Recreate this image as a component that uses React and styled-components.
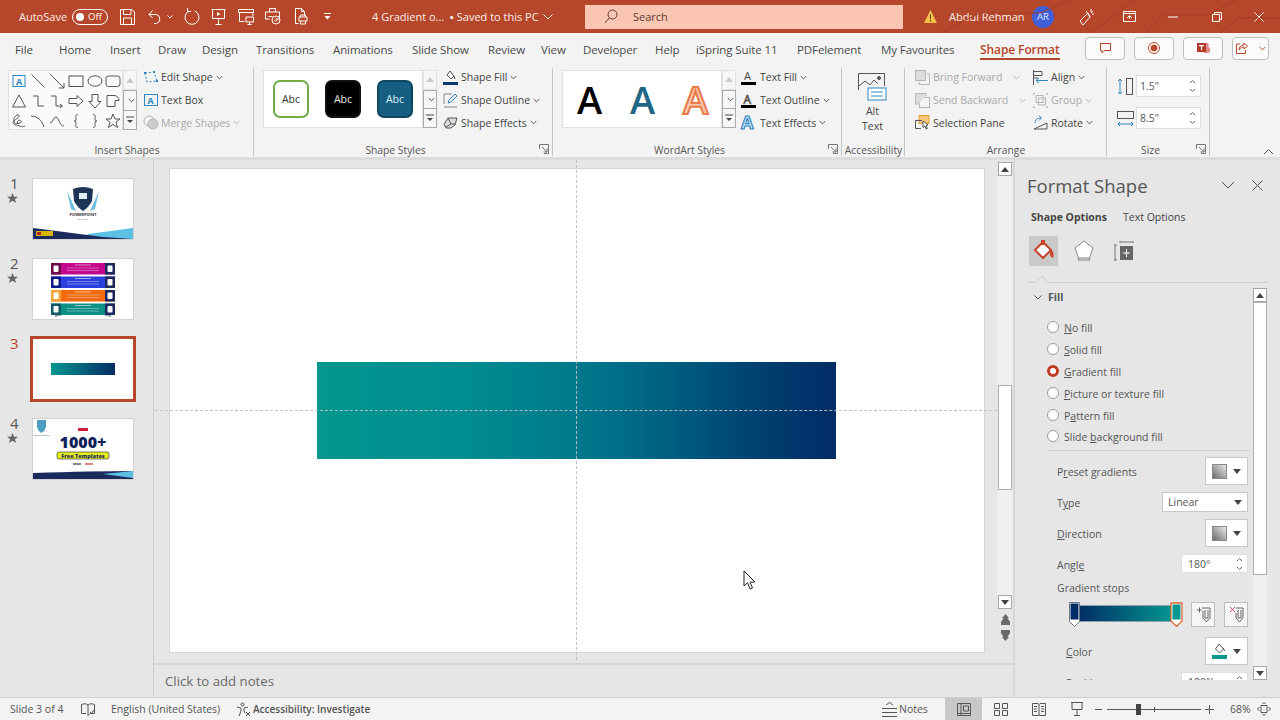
import React from 'react';
import styled, { createGlobalStyle } from 'styled-components';

const GlobalStyle = createGlobalStyle`
    html, body { margin: 0; padding: 0; background: #e6e6e6; }
    body { font-family: "Open Sans", "Noto Sans", sans-serif; color: #444; }
    * { box-sizing: border-box; }
`;

const Page = styled.div`
    position: relative;
    width: 1280px;
    height: 720px;
    overflow: hidden;
    display: flex;
    flex-direction: column;
`;

/* ---------- title bar ---------- */
const TitleBar = styled.div`
    position: relative;
    flex: none;
    height: 33px;
    background: #b7472a;
    color: #fff;
    display: flex;
    align-items: center;
    padding-left: 19px;
    font-size: 11px;
`;
const TitleText = styled.div`
    flex: none;
    width: ${(p) => p.$w}px;
    margin-left: ${(p) => p.$ml || 0}px;
    white-space: nowrap;
    color: #fbeee9;
`;
const Toggle = styled.div`
    flex: none;
    width: 36px;
    height: 16px;
    margin-left: 6px;
    border: 1px solid #fff;
    border-radius: 8px;
    display: flex;
    align-items: center;
    padding-left: 3px;
    gap: 4px;
    font-size: 9.5px;
    &::before {
        content: '';
        width: 8px;
        height: 8px;
        border-radius: 50%;
        background: #fff;
    }
`;
const TitleIcon = styled.svg`
    flex: none;
    margin-left: ${(p) => p.$ml || 0}px;
    fill: none;
    stroke: #fff;
    stroke-width: 1;
`;
const SearchBox = styled.div`
    flex: none;
    width: 318px;
    height: 24px;
    margin-left: 32px;
    background: #fbc5b3;
    color: #5a3a30;
    display: flex;
    align-items: center;
    padding-left: 19px;
    gap: 15px;
    font-size: 11px;
`;
const Avatar = styled.div`
    flex: none;
    width: 22px;
    height: 22px;
    margin-left: 9px;
    border-radius: 50%;
    background: #3f5fd8;
    color: #dfe6ff;
    font-size: 9.5px;
    display: flex;
    align-items: center;
    justify-content: center;
`;
const TitleDecor = styled.svg`
    position: absolute;
    right: 0;
    top: 0;
    pointer-events: none;
`;

/* ---------- tabs ---------- */
const TabRow = styled.div`
    flex: none;
    height: 33px;
    background: #f3f3f3;
    display: flex;
    align-items: center;
    padding-left: 15px;
    font-size: 11.5px;
    letter-spacing: -0.1px;
    color: #4a4a4a;
`;
const Tab = styled.div`
    flex: none;
    width: ${(p) => p.$w}px;
    height: 33px;
    line-height: 33px;
    white-space: nowrap;
    position: relative;
    ${(p) => p.$active && `
        color: #b7472a;
        font-weight: 600;
        font-size: 12px;
        &::after {
            content: '';
            position: absolute;
            left: 0;
            width: 80px;
            bottom: 6px;
            height: 2px;
            background: #b7472a;
        }
    `}
`;
const TabButton = styled.div`
    flex: none;
    width: ${(p) => p.$w}px;
    height: 23px;
    margin-top: -3px;
    margin-right: ${(p) => p.$mr}px;
    border: 1px solid #bdbdbd;
    border-radius: 4px;
    background: #fbfbfb;
    display: flex;
    align-items: center;
    justify-content: center;
    gap: 8px;
`;

/* ---------- ribbon ---------- */
const Ribbon = styled.div`
    flex: none;
    position: relative;
    height: 91px;
    background: #f3f3f3;
    display: flex;
`;
const RibbonEdge = styled.div`
    flex: none;
    height: 3px;
    background: #dcdcdc;
`;
const Group = styled.div`
    flex: none;
    position: relative;
    width: ${(p) => p.$w}px;
    padding-left: ${(p) => p.$pl || 0}px;
    &::after {
        content: '';
        position: absolute;
        right: 0;
        top: 2px;
        bottom: 1px;
        width: 1px;
        background: #c4c4c4;
    }
`;
const GroupBody = styled.div`
    display: flex;
    align-items: flex-start;
    height: 77px;
`;
const GroupLabel = styled.div`
    position: absolute;
    left: 0;
    right: ${(p) => (p.$launcher ? 16 : 0)}px;
    bottom: 0;
    height: 14px;
    line-height: 14px;
    text-align: center;
    font-size: 10.3px;
    color: #555;
    white-space: nowrap;
`;
const Launcher = styled.svg`
    position: absolute;
    right: 4px;
    bottom: 3px;
    fill: none;
    stroke: #777;
`;
const Gallery = styled.div`
    flex: none;
    margin-top: ${(p) => p.$mt || 4}px;
    width: ${(p) => p.$w}px;
    height: ${(p) => p.$h}px;
    padding-left: ${(p) => p.$pl || 0}px;
    background: #fff;
    border: 1px solid #e0e0e0;
    display: flex;
    align-items: center;
`;
const ShapeGrid = styled(Gallery)`
    display: grid;
    grid-template-columns: repeat(6, 18.8px);
    grid-auto-rows: 20px;
    padding-left: 1px;
    background: #fafafa;
    align-items: center;
    justify-items: center;
`;
const GalleryArrows = styled.div`
    flex: none;
    margin-top: 4px;
    width: 14px;
    height: ${(p) => p.$h}px;
    display: flex;
    flex-direction: column;
`;
const ArrowBtn = styled.div`
    flex: 1;
    border: 1px solid ${(p) => (p.$off ? '#e2e2e2' : '#ababab')};
    border-top-width: ${(p) => (p.$first ? 1 : 0)}px;
    background: #f6f6f6;
    display: flex;
    align-items: center;
    justify-content: center;
`;
const Swatch = styled.div`
    flex: none;
    width: 36px;
    height: 38px;
    margin-left: ${(p) => p.$ml}px;
    border-radius: 7px;
    border: 2px solid ${(p) => p.$line};
    background: ${(p) => p.$bg};
    color: ${(p) => p.$fg};
    font-size: 10.5px;
    display: flex;
    align-items: center;
    justify-content: center;
`;
const ArtLetter = styled.div`
    flex: none;
    width: 53px;
    text-align: center;
    font-size: 38px;
    line-height: 38px;
    font-weight: 600;
    color: ${(p) => p.$c};
    ${(p) => p.$outline && `-webkit-text-stroke: 2px ${p.$outline};`}
`;
const CmdColumn = styled.div`
    flex: none;
    margin-left: ${(p) => p.$ml || 0}px;
    width: ${(p) => p.$w || 'auto'};
    display: flex;
    flex-direction: column;
`;
const Cmd = styled.div`
    display: flex;
    align-items: center;
    height: 22.7px;
    font-size: 10.5px;
    white-space: nowrap;
    color: ${(p) => (p.$off ? '#a9a9a9' : '#444')};
`;
const CmdIcon = styled.svg`
    flex: none;
    margin-right: ${(p) => p.$mr || 3}px;
    overflow: visible;
    fill: none;
    stroke: ${(p) => (p.$off ? '#b5b5b5' : '#555')};
`;
const Caret = styled.svg`
    flex: none;
    margin-left: ${(p) => p.$ml || 3}px;
    fill: none;
    stroke: ${(p) => (p.$off ? '#b5b5b5' : '#555')};
`;
const AltButton = styled.div`
    width: 100%;
    padding: 7px 2px 0 0;
    display: flex;
    flex-direction: column;
    align-items: center;
    font-size: 10.5px;
    line-height: 15px;
    text-align: center;
    svg { margin-bottom: 2px; }
`;
const SizeRow = styled.div`
    display: flex;
    align-items: center;
    margin-top: ${(p) => p.$mt}px;
    gap: 2px;
`;
const Spin = styled.div`
    flex: none;
    width: ${(p) => p.$w}px;
    height: ${(p) => p.$h}px;
    background: #fff;
    border: 1px solid #dedede;
    font-size: 10.5px;
    display: flex;
    align-items: center;
    justify-content: space-between;
    padding: 0 4px 0 ${(p) => p.$pl || 3}px;
    color: #555;
`;
const SpinArrows = styled.svg`
    flex: none;
    fill: none;
    stroke: #666;
`;
const Collapse = styled.svg`
    position: absolute;
    left: 1263px;
    bottom: 2px;
    fill: none;
    stroke: #555;
`;

/* ---------- main area ---------- */
const Main = styled.div`
    flex: 1;
    min-height: 0;
    display: flex;
    background: #e6e6e6;
`;
const ThumbPane = styled.div`
    flex: none;
    width: 154px;
    padding-top: 19px;
    border-right: 1px solid #cfcfcf;
`;
const ThumbRow = styled.div`
    display: flex;
    height: 80px;
`;
const ThumbMark = styled.div`
    flex: none;
    width: 33px;
    margin-top: -4px;
    padding-left: 10px;
    font-size: 15px;
    line-height: 16px;
    color: ${(p) => (p.$active ? '#b7472a' : '#555')};
    svg { display: block; margin: 2px 0 0 -3px; }
`;
const Thumb = styled.div`
    flex: none;
    width: 100px;
    height: 60px;
    background: #fff;
    overflow: hidden;
    ${(p) => (p.$active ? 'outline: 3px solid #b7472a; outline-offset: 0;' : 'box-shadow: 0 0 0 1px #d2d2d2;')}
    svg { display: block; }
`;
const Center = styled.div`
    flex: none;
    width: 861px;
    display: flex;
    flex-direction: column;
    border-right: 2px solid #d6d6d6;
`;
const Stage = styled.div`
    flex: 1;
    min-height: 0;
    display: flex;
`;
const SlideArea = styled.div`
    flex: 1;
    position: relative;
    padding: 9px 0 0 16px;
`;
const Slide = styled.div`
    position: relative;
    width: 814px;
    height: 483px;
    background: #fff;
    box-shadow: 0 0 0 1px #d6d6d6;
`;
const SlideShape = styled.div`
    position: absolute;
    left: 147px;
    top: 193px;
    width: 519px;
    height: 97px;
    background: linear-gradient(90deg, #02978f 0%, #008d90 28%, #00798c 50%, #005f80 68%, #003f70 86%, #022c66 100%);
`;
const GuideV = styled.div`
    position: absolute;
    left: 422px;
    top: 0;
    height: 500px;
    border-left: 1px dashed rgba(185, 192, 198, 0.95);
`;
const GuideH = styled.div`
    position: absolute;
    left: 1px;
    top: 250px;
    width: 842px;
    border-top: 1px dashed rgba(185, 192, 198, 0.95);
`;
const VScroll = styled.div`
    flex: none;
    width: ${(p) => p.$w}px;
    margin: ${(p) => p.$m};
    display: flex;
    flex-direction: column;
    align-items: center;
`;
const ScrollBtn = styled.div`
    flex: none;
    width: 14px;
    height: 14px;
    background: #fff;
    border: 1px solid #a6a6a6;
    display: flex;
    align-items: center;
    justify-content: center;
`;
const ScrollTrack = styled.div`
    flex: ${(p) => p.$h ? `none` : 1};
    height: ${(p) => (p.$h ? `${p.$h}px` : 'auto')};
    width: 100%;
    background: #f0f0f0;
`;
const ScrollThumb = styled.div`
    flex: none;
    height: ${(p) => p.$h}px;
    width: 14px;
    background: #fff;
    border: 1px solid #b0b0b0;
`;
const SlideNav = styled.svg`
    flex: none;
    margin-top: ${(p) => p.$mt}px;
    fill: #6a6a6a;
`;
const Notes = styled.div`
    flex: none;
    height: 34px;
    border-top: 2px solid #d6d6d6;
    padding-left: 11px;
    font-size: 13.2px;
    line-height: 33px;
    color: #6a6a6a;
`;

/* ---------- format panel ---------- */
const FormatPane = styled.div`
    flex: none;
    width: 265px;
    padding-left: 12px;
    display: flex;
    flex-direction: column;
`;
const PaneHead = styled.div`
    flex: none;
    margin-top: 10px;
    height: 30px;
    display: flex;
    align-items: center;
    font-size: 18.5px;
    color: #555;
    span { flex: none; width: 194px; }
    svg { flex: none; fill: none; stroke: #555; }
`;
const OptionTabs = styled.div`
    flex: none;
    margin-top: 8px;
    height: 18px;
    padding-left: 4px;
    display: flex;
    align-items: center;
    font-size: 10.5px;
    b { width: 92px; font-weight: 700; color: #444; white-space: nowrap; }
`;
const IconTabs = styled.div`
    flex: none;
    margin-top: 10px;
    display: flex;
    padding-left: 2px;
`;
const IconTab = styled.div`
    flex: none;
    width: 29px;
    height: 30px;
    margin-right: ${(p) => p.$mr || 0}px;
    background: ${(p) => (p.$active ? '#c9c9c9' : 'transparent')};
    display: flex;
    align-items: center;
    justify-content: center;
`;
const TabRule = styled.svg`
    flex: none;
    display: block;
    margin-top: 9px;
    fill: none;
    stroke: #cdcdcd;
`;
const PaneScroll = styled.div`
    flex: none;
    margin-top: 5px;
    height: 392px;
    display: flex;
`;
const PaneContent = styled.div`
    flex: none;
    width: 226px;
    height: 392px;
    overflow: hidden;
    font-size: 10.5px;
    color: #555;
`;
const FillHead = styled.div`
    height: 18px;
    display: flex;
    align-items: center;
    padding-left: 7px;
    gap: 6px;
    font-weight: 700;
    margin-bottom: 10px;
    svg { fill: none; stroke: #555; }
`;
const RadioRow = styled.div`
    height: 21.9px;
    display: flex;
    align-items: center;
    padding-left: 20px;
    gap: 5px;
    span { padding-top: 2px; }
`;
const Radio = styled.div`
    flex: none;
    width: 12px;
    height: 12px;
    border-radius: 50%;
    background: #fff;
    border: ${(p) => (p.$on ? '3.5px solid #c13a22' : '1px solid #9a9a9a')};
`;
const PaneRule = styled.div`
    margin: 3px 3px 0 21px;
    height: 1px;
    background: #cfcfcf;
`;
const Field = styled.div`
    margin-top: ${(p) => p.$mt}px;
    height: ${(p) => p.$h}px;
    padding-left: ${(p) => p.$pl || 30}px;
    padding-right: 5px;
    display: flex;
    align-items: center;
    justify-content: space-between;
    > span { padding-top: 2px; }
`;
const PickBox = styled.div`
    flex: none;
    width: ${(p) => p.$w || 43}px;
    height: 100%;
    background: #fff;
    border: 1px solid #c8c8c8;
    display: flex;
    align-items: center;
    justify-content: ${(p) => (p.$text ? 'space-between' : 'center')};
    padding: ${(p) => (p.$text ? '0 5px' : '0')};
    gap: 6px;
    svg { flex: none; }
`;
const StopBar = styled.div`
    position: relative;
    flex: none;
    width: 113px;
    height: 25px;
    margin-left: 12px;
`;
const StopFill = styled.div`
    position: absolute;
    left: 8px;
    right: 8px;
    top: 3px;
    height: 17px;
    border: 1px solid #8ea0a8;
    background: linear-gradient(90deg, #022c66, #02978f);
`;
const StopPin = styled.svg`
    position: absolute;
    top: 0;
    left: ${(p) => p.$x}px;
`;
const StopTools = styled.div`
    display: flex;
    gap: 9px;
`;
const StopTool = styled.div`
    width: 24px;
    height: 25px;
    background: #f6f6f6;
    border: 1px solid #bdbdbd;
    display: flex;
    align-items: center;
    justify-content: center;
`;

/* ---------- status bar ---------- */
const StatusBar = styled.div`
    flex: none;
    height: 23px;
    background: #f3f3f3;
    border-top: 1px solid #cfcfcf;
    display: flex;
    align-items: center;
    padding-left: 10px;
    font-size: 10.5px;
    color: #555;
`;
const StatusText = styled.div`
    flex: none;
    width: ${(p) => p.$w}px;
    margin-left: ${(p) => p.$ml || 0}px;
    white-space: nowrap;
    font-weight: ${(p) => (p.$bold ? 600 : 400)};
    font-size: ${(p) => (p.$bold ? 10 : 10.5)}px;
`;
const StatusIcon = styled.svg`
    flex: none;
    margin-left: ${(p) => p.$ml || 0}px;
    fill: none;
    stroke: #555;
`;
const ViewBtn = styled.div`
    flex: none;
    width: ${(p) => p.$w}px;
    height: 22px;
    margin-left: ${(p) => p.$ml || 0}px;
    background: ${(p) => (p.$active ? '#c8c8c8' : 'transparent')};
    display: flex;
    align-items: center;
    justify-content: center;
`;
const ZoomSlider = styled.div`
    position: relative;
    flex: none;
    width: 94px;
    height: 1px;
    margin-left: 5px;
    background: #555;
`;
const ZoomKnob = styled.div`
    position: absolute;
    left: 29px;
    top: -5px;
    width: 5px;
    height: 11px;
    background: #444;
`;
const ZoomTick = styled.div`
    position: absolute;
    left: 47px;
    top: -2px;
    width: 1px;
    height: 5px;
    background: #555;
`;
const Cursor = styled.svg`
    position: absolute;
    left: 743px;
    top: 570px;
`;

/* ---------- drawings ---------- */
const Chevron = (props) => (
    <Caret width="7" height="5" viewBox="0 0 7 5" {...props}>
        <path d="M.7 1l2.8 2.8L6.3 1" />
    </Caret>
);
const Tri = ({ up, c = '#444', w = 8 }) => (
    <svg width={w} height="5" viewBox="0 0 8 5" fill={c}>
        <path d={up ? 'M0 5h8L4 0z' : 'M0 0h8L4 5z'} />
    </svg>
);
const More = () => (
    <svg width="8" height="8" viewBox="0 0 8 8" fill="#444" stroke="#444">
        <path d="M0 1h8" fill="none" />
        <path d="M1 4h6L4 7z" stroke="none" />
    </svg>
);
const GalleryScroll = ({ h }) => (
    <GalleryArrows $h={h}>
        <ArrowBtn $off $first><Tri up c="#c9c9c9" /></ArrowBtn>
        <ArrowBtn $first><Chevron $ml={0} /></ArrowBtn>
        <ArrowBtn><More /></ArrowBtn>
    </GalleryArrows>
);
const DialogMark = () => (
    <Launcher width="10" height="10" viewBox="0 0 10 10">
        <path d="M.5 5V.5H9.500V9.500H5M3 3l5 5M8 4.500V8H4.500" />
    </Launcher>
);
const SpinMark = () => (
    <SpinArrows width="7" height="14" viewBox="0 0 7 14">
        <path d="M1 4l2.500-2.500L6 4M1 10l2.500 2.500L6 10" />
    </SpinArrows>
);
const Blue = '#2f86c5';

const shapeCells = [
    <g key="tb"><rect x="2" y="2.500" width="12" height="11" stroke={Blue} /><text x="5" y="12" fontSize="9" fontWeight="700" fill={Blue} stroke="none">A</text></g>,
    <path key="l" d="M1.500 1.500l13 13" />,
    <path key="a" d="M1 1l14 14M15 10v5h-5" />,
    <rect key="r" x="1" y="3" width="14" height="10.500" />,
    <ellipse key="e" cx="8" cy="8" rx="7" ry="5.200" />,
    <rect key="rr" x="1" y="3" width="14" height="10.500" rx="2.500" />,
    <path key="t" d="M8 2l6.500 12h-13z" />,
    <path key="c1" d="M3 3h5v10h6" />,
    <path key="c2" d="M2 3h5v10h6M11 11l2.500 2-2.500 2" />,
    <path key="ba" d="M1 5.500h8V2.500L15 8l-6 5.500v-3H1z" />,
    <path key="da" d="M5 1.500h6v7h3L8 15 2 8.500h3z" />,
    <path key="sn" d="M2 2.500h7c3 0 5 2 5 5H10v6H2z" />,
    <path key="fr" d="M14 13c-4 2-6-1-9-1-3 0-4-3-1-5s6-5 3-5-5 4-4 7 9 1 7-1-5 0-3 3" />,
    <path key="ar" d="M1 3c6 0 11 4 13 11" />,
    <path key="s" d="M1 10c3 0 3-6 6-6s3 9 8 9" />,
    <path key="bl" d="M10 1.500c-3 0-2 2.500-2 4.500 0 2-1 2-2 2 1 0 2 0 2 2 0 2-1 4.500 2 4.500" />,
    <path key="br" d="M6 1.500c3 0 2 2.500 2 4.500 0 2 1 2 2 2-1 0-2 0-2 2 0 2 1 4.500-2 4.500" />,
    <path key="st" d="M8 1l2 5h5l-4 3.200 1.500 5.300L8 11.400 3.500 14.500 5 9.200 1 6h5z" />,
];

const TabData = [
    ['File', 59], ['Home', 110], ['Insert', 158], ['Draw', 202], ['Design', 256], ['Transitions', 333],
    ['Animations', 412], ['Slide Show', 488], ['Review', 541], ['View', 583], ['Developer', 655], ['Help', 696],
    ['iSpring Suite 11', 797], ['PDFelement', 881], ['My Favourites', 980], ['Shape Format', 1085],
];

const StarMark = () => (
    <svg width="11" height="11" viewBox="0 0 12 12" fill="#666"><path d="M6 0l1.700 4H12L8.600 6.700 10 11 6 8.400 2 11l1.400-4.300L0 4h4.300z" /></svg>
);
const Wave = ({ y = 49 }) => (
    <g>
        <path d={`M55 55L100 ${y}V60H50z`} fill="#5bc0e4" />
        <path d={`M0 ${y}L70 58L100 60H0z`} fill="#1c2a5e" />
    </g>
);
const Thumb1 = () => (
    <svg width="100" height="60" viewBox="0 0 100 60">
        <path d="M34 12l9 20-5-2zM66 12L57 32l5-2z" fill="#69bde0" />
        <path d="M40 10q10-4 20 0l-1 12q-3 6-9 10-6-4-9-10z" fill="#1c3557" />
        <rect x="46" y="14" width="8" height="6" fill="#dfeff6" />
        <text x="50" y="37" fontSize="4" fontWeight="700" textAnchor="middle" fill="#333">POWERPOINT</text>
        <text x="50" y="41" fontSize="2.500" textAnchor="middle" fill="#666">SCHOOL</text>
        <Wave />
        <rect x="3" y="52" width="17" height="5" fill="#d9b400" />
        <rect x="4" y="53" width="4" height="3" fill="#b3261e" />
    </svg>
);
const rowColors = [
    ['#c2078c', '#6d0a4b'], ['#2b3fdc', '#0f1a8a'], ['#f26a0d', '#f4a43a'], ['#0e8f85', '#135a66'],
];
const Thumb2 = () => (
    <svg width="100" height="60" viewBox="0 0 100 60">
        <path d="M22 58q28-8 56 0v-3H22z" fill="#8a9aa0" />
        {rowColors.map(([c, d], i) => (
            <g key={c}>
                <rect x="18" y={4 + i * 13.500} width="64" height="11.500" fill={c} />
                <rect x="18" y={4 + i * 13.500} width="10" height="11.500" fill={d} />
                <rect x="72" y={4 + i * 13.500} width="10" height="11.500" fill="#1c2a5e" />
                <rect x="20.500" y={6.500 + i * 13.500} width="5" height="6.500" rx="1" fill="#fff" />
                <rect x="74.500" y={6.500 + i * 13.500} width="5" height="6.500" rx="1" fill="#fff" />
                <rect x="42" y={5.500 + i * 13.500} width="16" height="1" fill="#fff" opacity=".55" />
                <rect x="34" y={8.500 + i * 13.500} width="32" height="1" fill="#fff" opacity=".35" />
                <rect x="34" y={11 + i * 13.500} width="32" height="1" fill="#fff" opacity=".35" />
            </g>
        ))}
    </svg>
);
const Thumb3 = () => (
    <svg width="100" height="60" viewBox="0 0 100 60">
        <defs>
            <linearGradient id="t3" x1="0" x2="1" y1="0" y2="0">
                <stop offset="0" stopColor="#02978f" />
                <stop offset="1" stopColor="#022c66" />
            </linearGradient>
        </defs>
        <rect x="18" y="24" width="64" height="12" fill="url(#t3)" />
    </svg>
);
const Thumb4 = () => (
    <svg width="100" height="60" viewBox="0 0 100 60">
        <path d="M4 1h9v7q-1 4-4.500 6Q5 12 4 8z" fill="#4d9cc2" />
        <text x="8.500" y="16.500" fontSize="2.500" textAnchor="middle" fill="#555">POWERPOINT</text>
        <rect x="45" y="9" width="10" height="3" fill="#c8203a" />
        <text x="50" y="29" fontSize="16" fontWeight="800" textAnchor="middle" fill="#12235c" fontFamily="Open Sans">1000+</text>
        <rect x="24" y="33" width="52" height="7" rx="2" fill="#e7ee1e" stroke="#222" strokeWidth=".6" />
        <text x="50" y="38.500" fontSize="5.500" fontWeight="800" textAnchor="middle" fill="#1c2a5e" fontFamily="Open Sans">Free Templates</text>
        <rect x="40" y="44" width="8" height="2" fill="#888" />
        <rect x="52" y="44" width="8" height="2" fill="#d88" />
        <path d="M0 54Q60 52 100 52V60H0z" fill="#1c2a5e" />
        <path d="M70 55L100 52V59z" fill="#5bc0e4" />
    </svg>
);

const thumbs = [
    { n: 1, star: true, el: <Thumb1 /> },
    { n: 2, star: true, el: <Thumb2 /> },
    { n: 3, active: true, el: <Thumb3 /> },
    { n: 4, star: true, el: <Thumb4 /> },
];

const GradientSwatch = () => (
    <svg width="15" height="15" viewBox="0 0 15 15">
        <defs>
            <linearGradient id="gs" x1="0" y1="1" x2="1" y2="0">
                <stop offset="0" stopColor="#666" />
                <stop offset="1" stopColor="#eee" />
            </linearGradient>
        </defs>
        <rect x=".5" y=".5" width="14" height="14" fill="url(#gs)" stroke="#888" />
    </svg>
);

const App = () => {
    return (
        <Page>
            <GlobalStyle />
            <TitleBar>
                <TitleText $w={47}>AutoSave</TitleText>
                <Toggle>Off</Toggle>
                <TitleIcon $ml={12} width="15" height="16" viewBox="0 0 15 16">
                    <path d="M.5.500h11.500l2.500 2.500v12.500H.5zM3.500.5v5h7.500v-5M3.500 15.500V9h8v6.500" />
                </TitleIcon>
                <TitleIcon $ml={13} width="14" height="15" viewBox="0 0 14 15">
                    <path d="M1 5.500h7.500a4.700 4.700 0 0 1 0 9H6M4.500 1.500L1 5.500 4.500 9" />
                </TitleIcon>
                <TitleIcon $ml={5} width="6" height="4" viewBox="0 0 6 4"><path d="M.5.500l2.500 2.500L5.500.5" /></TitleIcon>
                <TitleIcon $ml={11} width="16" height="17" viewBox="0 0 16 17">
                    <path d="M5 3a7 7 0 1 0 5.500-.2M3.500 0v3.500H7" />
                </TitleIcon>
                <TitleIcon $ml={11} width="15" height="16" viewBox="0 0 15 16">
                    <path d="M.5.500h14M1.500.5v9h12v-9M7.500 9.500V15M4.500 15.500h6" />
                    <path d="M6 3l3.500 2L6 7z" fill="#fff" stroke="none" />
                </TitleIcon>
                <TitleIcon $ml={12} width="16" height="16" viewBox="0 0 16 16">
                    <path d="M.5.500h15v3H.5zM1.500 3.500v9h5M15 3.500V7M8 8h7.500v5H8zM11.500 13v2M9.500 15.500h4" />
                </TitleIcon>
                <TitleIcon $ml={11} width="16" height="17" viewBox="0 0 16 17">
                    <path d="M4.500 4V.5h6V4M.5 4h14v7h-4M4.500 11H.5V4M3.500 8.500h4" />
                    <circle cx="11" cy="12" r="4" />
                    <path d="M9.300 12l1.300 1.300 2-2.300" />
                </TitleIcon>
                <TitleIcon $ml={14} width="13" height="17" viewBox="0 0 13 17">
                    <path d="M.5.500h6l3 3v4M6.500.5v3h3M.5.500v15h3M4 9h8v4H4zM5.500 9V7h5v2M5.500 13v3h5v-3" />
                </TitleIcon>
                <TitleIcon $ml={16} width="7" height="7" viewBox="0 0 7 7">
                    <path d="M0 .5h7" /><path d="M.5 3h6L3.500 6.500z" fill="#fff" stroke="none" />
                </TitleIcon>
                <TitleText $ml={41} $w={78}>4 Gradient o...</TitleText>
                <TitleText $w={93}>▪ Saved to this PC</TitleText>
                <TitleIcon width="10" height="6" viewBox="0 0 10 6"><path d="M.5.500L5 5 9.500.5" /></TitleIcon>
                <SearchBox>
                    <svg width="14" height="15" viewBox="0 0 14 15" fill="none" stroke="#5a3a30">
                        <circle cx="8.500" cy="5.500" r="4.500" /><path d="M5.200 9L1 14" />
                    </svg>
                    Search
                </SearchBox>
                <svg style={{ marginLeft: 21, flex: 'none' }} width="13" height="13" viewBox="0 0 13 13">
                    <path d="M6.500 0L13 13H0z" fill="#f3c14b" />
                    <path d="M6 4.500h1V9H6zM6 10h1v1.500H6z" fill="#6b3a10" />
                </svg>
                <TitleText $ml={12} $w={74}>Abdul Rehman</TitleText>
                <Avatar>AR</Avatar>
                <TitleIcon $ml={25} width="16" height="18" viewBox="0 0 16 18">
                    <path d="M9 5L1 13l3 4 7-8zM11 9L7 3M12 1v3M14 3l-2 2M15 6h-2" />
                </TitleIcon>
                <TitleIcon $ml={28} width="13" height="11" viewBox="0 0 13 11">
                    <path d="M.5.500h12v10H.5zM.5 2.500h12M4 7l2.500-2.500L9 7M6.500 5v3" />
                </TitleIcon>
                <TitleIcon $ml={32} width="10" height="2" viewBox="0 0 10 2"><path d="M0 1h10" /></TitleIcon>
                <TitleIcon $ml={34} width="10" height="10" viewBox="0 0 10 10">
                    <path d="M.5 2.500h7v7h-7zM2.500 2.500v-2h7v7h-2" />
                </TitleIcon>
                <TitleIcon $ml={32} width="10" height="10" viewBox="0 0 10 10"><path d="M.5.500l9 9M9.500.500l-9 9" /></TitleIcon>
                <TitleDecor width="360" height="33" viewBox="0 0 360 33" fill="none" stroke="#a23e24">
                    <path d="M20 33l40-20h60l30-13M170 33l45-33M225 33l18-18h45l28-15M300 33l18-15h42" />
                </TitleDecor>
            </TitleBar>

            <TabRow>
                {TabData.map(([name, next], i) => {
                    const x = i === 0 ? 15 : TabData[i - 1][1];
                    return <Tab key={name} $w={next - x} $active={name === 'Shape Format'}>{name}</Tab>;
                })}
                <TabButton $w={40} $mr={9}>
                    <svg width="11" height="11" viewBox="0 0 11 11" fill="none" stroke="#b7472a"><path d="M.5.500h10v7H4L2 10V7.500H.5z" /></svg>
                </TabButton>
                <TabButton $w={40} $mr={9}>
                    <svg width="12" height="12" viewBox="0 0 12 12" fill="none" stroke="#b7472a"><circle cx="6" cy="6" r="5.500" /><circle cx="6" cy="6" r="3" fill="#b7472a" /></svg>
                </TabButton>
                <TabButton $w={40} $mr={9}>
                    <svg width="13" height="12" viewBox="0 0 13 12"><circle cx="10" cy="3" r="2" fill="#d88" /><rect x="6" y="5" width="7" height="6" rx="2" fill="#d88" /><rect y="1" width="9" height="9" fill="#b7372a" /><path d="M2 3h5v1.200H5.100V8H3.900V4.200H2z" fill="#fff" /></svg>
                </TabButton>
                <TabButton $w={37} $mr={0}>
                    <svg width="12" height="12" viewBox="0 0 12 12" fill="none" stroke="#b7472a"><path d="M4 2H.5v9.500h9V8M3 8c0-3 2-5 5-5V1l3.500 3L8 7V5C6 5 4 6 3 8z" /></svg>
                    <Chevron $ml={0} style={{ stroke: '#b7472a' }} />
                </TabButton>
            </TabRow>

            <Ribbon>
                <Group $w={254} $pl={8}>
                    <GroupBody>
                        <ShapeGrid $w={115} $h={60}>
                            {shapeCells.map((c, i) => (
                                <svg key={i} width="16" height="16" viewBox="0 0 16 16" fill="none" stroke="#555">{c}</svg>
                            ))}
                        </ShapeGrid>
                        <GalleryScroll h={60} />
                        <CmdColumn $ml={6}>
                            <Cmd>
                                <CmdIcon $mr={2} width="16" height="14" viewBox="0 0 16 14"><path d="M2 3l9-1 3 9-10 1z" strokeDasharray="2 2" stroke={Blue} /><rect x="1" y="2" width="2" height="2" fill={Blue} stroke="none" /><rect x="10" y="1" width="2" height="2" fill={Blue} stroke="none" /><rect x="13" y="10" width="2" height="2" fill={Blue} stroke="none" /></CmdIcon>
                                Edit Shape<Chevron />
                            </Cmd>
                            <Cmd>
                                <CmdIcon $mr={2} width="16" height="14" viewBox="0 0 16 14"><rect x="1.500" y="1.500" width="13" height="11" stroke={Blue} /><text x="4.500" y="11" fontSize="9" fontWeight="700" fill={Blue} stroke="none">A</text></CmdIcon>
                                Text Box
                            </Cmd>
                            <Cmd $off>
                                <CmdIcon $mr={2} $off width="16" height="15" viewBox="0 0 16 15"><circle cx="6" cy="6" r="5" /><circle cx="10" cy="9" r="5" fill="#ccc" /></CmdIcon>
                                Merge Shapes<Chevron $off />
                            </Cmd>
                        </CmdColumn>
                    </GroupBody>
                    <GroupLabel>Insert Shapes</GroupLabel>
                </Group>

                <Group $w={299} $pl={9}>
                    <GroupBody>
                        <Gallery $w={160} $h={58}>
                            <Swatch $ml={9} $bg="#fff" $fg="#333" $line="#70ad47">Abc</Swatch>
                            <Swatch $ml={16} $bg="#000" $fg="#e8e8e8" $line="#111">Abc</Swatch>
                            <Swatch $ml={16} $bg="#156082" $fg="#dcecf5" $line="#0f4761">Abc</Swatch>
                        </Gallery>
                        <GalleryScroll h={58} />
                        <CmdColumn $ml={6}>
                            <Cmd>
                                <CmdIcon width="15" height="15" viewBox="0 0 15 15"><path d="M7 1l4 5-3 3-4-4zM11 6l1 3" /><rect y="12" width="15" height="3" fill="#0f3a78" stroke="none" /></CmdIcon>
                                Shape Fill<Chevron />
                            </Cmd>
                            <Cmd>
                                <CmdIcon width="15" height="15" viewBox="0 0 15 15"><path d="M1 1h8M1 1v10M1 14h13" stroke="#888" /><path d="M5 10l1-3 6-6 2 2-6 6z" stroke={Blue} /></CmdIcon>
                                Shape Outline<Chevron />
                            </Cmd>
                            <Cmd>
                                <CmdIcon width="15" height="15" viewBox="0 0 15 15"><path d="M1 9l4-6h9l-2 7-4 3H3z" fill="#ddd" /><path d="M5 3l3 6-5 3M8 9h4" /></CmdIcon>
                                Shape Effects<Chevron />
                            </Cmd>
                        </CmdColumn>
                    </GroupBody>
                    <GroupLabel $launcher>Shape Styles</GroupLabel>
                    <DialogMark />
                </Group>

                <Group $w={289} $pl={9}>
                    <GroupBody>
                        <Gallery $w={160} $h={58}>
                            <ArtLetter $c="#000">A</ArtLetter>
                            <ArtLetter $c="#1f6784">A</ArtLetter>
                            <ArtLetter $c="#f8c6ab" $outline="#e97b4b">A</ArtLetter>
                        </Gallery>
                        <GalleryScroll h={58} />
                        <CmdColumn $ml={5}>
                            <Cmd>
                                <CmdIcon width="15" height="15" viewBox="0 0 15 15"><text x="3" y="10" fontSize="11" fill="#444" stroke="none">A</text><rect y="12" width="15" height="3" fill="#000" stroke="none" /></CmdIcon>
                                <span style={{ marginLeft: 1 }}>Text Fill</span><Chevron />
                            </Cmd>
                            <Cmd>
                                <CmdIcon width="15" height="15" viewBox="0 0 15 15"><text x="2.500" y="10.500" fontSize="12" fill="none" stroke="#444" strokeWidth=".7">A</text><rect y="12" width="15" height="3" fill="#000" stroke="none" /></CmdIcon>
                                <span style={{ marginLeft: 1 }}>Text Outline</span><Chevron />
                            </Cmd>
                            <Cmd>
                                <CmdIcon width="15" height="15" viewBox="0 0 15 15"><text x="0" y="14" fontSize="18" fontWeight="700" fill="#bfe0f5" stroke={Blue} strokeWidth="1.100">A</text></CmdIcon>
                                <span style={{ marginLeft: 1 }}>Text Effects</span><Chevron />
                            </Cmd>
                        </CmdColumn>
                    </GroupBody>
                    <GroupLabel $launcher>WordArt Styles</GroupLabel>
                    <DialogMark />
                </Group>

                <Group $w={63}>
                    <GroupBody>
                        <AltButton>
                            <svg width="29" height="29" viewBox="0 0 29 29" fill="none" stroke="#555">
                                <path d="M.5 17V.5h26V13M1 13l6-5 5 4 4-5 4 4" />
                                <circle cx="21" cy="5" r="1.500" fill="#555" />
                                <rect x="10" y="15" width="18" height="12" fill="#fff" stroke={Blue} />
                                <path d="M13 19h12M13 23h12" stroke={Blue} />
                            </svg>
                            Alt<br />Text
                        </AltButton>
                    </GroupBody>
                    <GroupLabel>Accessibility</GroupLabel>
                </Group>

                <Group $w={202} $pl={10}>
                    <GroupBody>
                        <CmdColumn $w="118px">
                            <Cmd $off>
                                <CmdIcon $off width="15" height="15" viewBox="0 0 15 15"><rect x=".5" y=".5" width="10" height="10" fill="#ddd" /><path d="M12 4h2.500v10.500H4V12" /></CmdIcon>
                                Bring Forward<Chevron $off $ml={11} />
                            </Cmd>
                            <Cmd $off>
                                <CmdIcon $off width="15" height="15" viewBox="0 0 15 15"><rect x="4.500" y="4.500" width="10" height="10" /><path d="M3 11H.5V.5H11V3" fill="#ddd" /></CmdIcon>
                                Send Backward<Chevron $off $ml={11} />
                            </Cmd>
                            <Cmd>
                                <CmdIcon width="15" height="15" viewBox="0 0 15 15"><rect x="4" y=".5" width="10" height="8" fill="#f6c77a" stroke="#e0a040" /><path d="M6 13.500H.5v-8H7" /><path d="M8 6l5 4-2 .5 1.500 3-1.500.5-1-3-2 1.500z" fill="#fff" /></CmdIcon>
                                Selection Pane
                            </Cmd>
                        </CmdColumn>
                        <CmdColumn>
                            <Cmd>
                                <CmdIcon width="15" height="15" viewBox="0 0 15 15"><path d="M.5 0v15M1 1.500h8v4H1M1 8h4" /><path d="M15 10.500H3M6 8l-3 2.500L6 13" stroke={Blue} /></CmdIcon>
                                Align<Chevron />
                            </Cmd>
                            <Cmd $off>
                                <CmdIcon $off width="15" height="15" viewBox="0 0 15 15"><path d="M.5 2V.5H2M13 .5h1.500V2M14.500 13v1.500H13M2 14.500H.5V13" /><rect x="3" y="2.500" width="7" height="7" /><rect x="5.500" y="5" width="7" height="7" /></CmdIcon>
                                Group<Chevron $off />
                            </Cmd>
                            <Cmd>
                                <CmdIcon width="15" height="15" viewBox="0 0 15 15"><path d="M1 14L14 8v6z" /><path d="M2 8c0-3 2-5 6-5M6 .5L8.500 3 6 5.500" stroke={Blue} /></CmdIcon>
                                Rotate<Chevron />
                            </Cmd>
                        </CmdColumn>
                    </GroupBody>
                    <GroupLabel>Arrange</GroupLabel>
                </Group>

                <Group $w={103} $pl={10}>
                    <GroupBody>
                        <CmdColumn>
                            <SizeRow $mt={9}>
                                <svg width="17" height="17" viewBox="0 0 17 17" fill="none" stroke="#555">
                                    <rect x="9.500" y=".5" width="6" height="16" />
                                    <path d="M3 1v15M1 3l2-2 2 2M1 14l2 2 2-2" stroke={Blue} />
                                </svg>
                                <Spin $w={65} $h={22}>1.5"<SpinMark /></Spin>
                            </SizeRow>
                            <SizeRow $mt={10}>
                                <svg width="17" height="17" viewBox="0 0 17 17" fill="none" stroke="#555">
                                    <rect x=".5" y="1.500" width="16" height="7" />
                                    <path d="M1 14h15M3 12l-2 2 2 2M14 12l2 2-2 2" stroke={Blue} />
                                </svg>
                                <Spin $w={65} $h={22}>8.5"<SpinMark /></Spin>
                            </SizeRow>
                        </CmdColumn>
                    </GroupBody>
                    <GroupLabel $launcher>Size</GroupLabel>
                    <DialogMark />
                </Group>
                <Collapse width="11" height="7" viewBox="0 0 11 7"><path d="M1 6l4.500-4.500L10 6" /></Collapse>
            </Ribbon>
            <RibbonEdge />

            <Main>
                <ThumbPane>
                    {thumbs.map((t) => (
                        <ThumbRow key={t.n}>
                            <ThumbMark $active={t.active}>
                                {t.n}
                                {t.star && <StarMark />}
                            </ThumbMark>
                            <Thumb $active={t.active}>{t.el}</Thumb>
                        </ThumbRow>
                    ))}
                </ThumbPane>

                <Center>
                    <Stage>
                        <SlideArea>
                            <Slide>
                                <SlideShape />
                            </Slide>
                            <GuideV />
                            <GuideH />
                        </SlideArea>
                        <VScroll $w={16} $m="2px 0 0 0">
                            <ScrollBtn><Tri up w={8} /></ScrollBtn>
                            <ScrollTrack $h={209} />
                            <ScrollThumb $h={105} />
                            <ScrollTrack $h={105} />
                            <ScrollBtn><Tri w={8} /></ScrollBtn>
                            <SlideNav $mt={5} width="9" height="11" viewBox="0 0 9 11"><path d="M4.500 0L8 4H6.500L9 8v3H0V8l2.500-4H1z" /></SlideNav>
                            <SlideNav $mt={5} width="9" height="11" viewBox="0 0 9 11"><path d="M0 0h9v3L6.500 7H8l-3.500 4L1 7h1.500L0 3z" /></SlideNav>
                        </VScroll>
                    </Stage>
                    <Notes>Click to add notes</Notes>
                </Center>

                <FormatPane>
                    <PaneHead>
                        <span>Format Shape</span>
                        <svg width="14" height="8" viewBox="0 0 14 8" style={{ marginRight: 17 }}><path d="M1 1l6 6 6-6" /></svg>
                        <svg width="11" height="11" viewBox="0 0 11 11"><path d="M.5.500l10 10M10.500.500l-10 10" /></svg>
                    </PaneHead>
                    <OptionTabs>
                        <b>Shape Options</b>
                        <span>Text Options</span>
                    </OptionTabs>
                    <IconTabs>
                        <IconTab $active $mr={11}>
                            <svg width="24" height="24" viewBox="0 0 24 24">
                                <path d="M11 3l8 8-8 8-8-8z" fill="#fff" stroke="#c8452a" strokeWidth="2" />
                                <path d="M9 1h4v5H9z" fill="#c8452a" />
                                <path d="M18 10q5 3 3 9-2 0-3-3z" fill="#c8452a" />
                            </svg>
                        </IconTab>
                        <IconTab $mr={11}>
                            <svg width="20" height="22" viewBox="0 0 20 22" fill="#fff" stroke="#888">
                                <path d="M10 1l9 7-3.500 10h-11L1 8z" />
                                <path d="M4 20l1-2M16 20l-1-2M4 20h12" fill="none" />
                            </svg>
                        </IconTab>
                        <IconTab>
                            <svg width="20" height="20" viewBox="0 0 20 20" fill="none" stroke="#777">
                                <path d="M6 1h13M6 0v2M19 0v2M1 4v15M0 4h3M0 19h3" />
                                <rect x="6" y="5" width="13" height="14" fill="#666" stroke="none" />
                                <path d="M12.500 8v8M9 12h7" stroke="#fff" />
                            </svg>
                        </IconTab>
                    </IconTabs>
                    <TabRule width="242" height="8" viewBox="0 0 242 8">
                        <path d="M0 7.500h8L15 1l7 6.500h220" />
                    </TabRule>
                    <PaneScroll>
                        <PaneContent>
                            <FillHead>
                                <svg width="8" height="5" viewBox="0 0 8 5"><path d="M.5.500L4 4 7.500.5" /></svg>
                                Fill
                            </FillHead>
                            <RadioRow><Radio /><span><u>N</u>o fill</span></RadioRow>
                            <RadioRow><Radio /><span><u>S</u>olid fill</span></RadioRow>
                            <RadioRow><Radio $on /><span><u>G</u>radient fill</span></RadioRow>
                            <RadioRow><Radio /><span><u>P</u>icture or texture fill</span></RadioRow>
                            <RadioRow><Radio /><span>P<u>a</u>ttern fill</span></RadioRow>
                            <RadioRow><Radio /><span>Slide <u>b</u>ackground fill</span></RadioRow>
                            <PaneRule />
                            <Field $mt={6} $h={28}>
                                <span>P<u>r</u>eset gradients</span>
                                <PickBox><GradientSwatch /><Tri /></PickBox>
                            </Field>
                            <Field $mt={7} $h={20}>
                                <span>T<u>y</u>pe</span>
                                <PickBox $w={86} $text>Linear<Tri /></PickBox>
                            </Field>
                            <Field $mt={7} $h={28}>
                                <span><u>D</u>irection</span>
                                <PickBox><GradientSwatch /><Tri /></PickBox>
                            </Field>
                            <Field $mt={7} $h={19}>
                                <span>Angl<u>e</u></span>
                                <Spin $w={67} $h={19} $pl={6}>180°<SpinMark /></Spin>
                            </Field>
                            <Field $mt={6} $h={18}>Gradient stops</Field>
                            <Field $mt={5} $h={25}>
                                <StopBar>
                                    <StopFill />
                                    <StopPin $x={0} width="11" height="25" viewBox="0 0 11 25">
                                        <path d="M.5.500h10v19L5.500 24.500l-5-5z" fill="#fff" stroke="#6a7a88" />
                                        <rect x="1.500" y="1.500" width="8" height="16" fill="#022c66" />
                                    </StopPin>
                                    <StopPin $x={101} width="13" height="25" viewBox="0 0 13 25">
                                        <path d="M1 1h11v18l-5.500 5.500L1 19z" fill="#fff" stroke="#d9692f" strokeWidth="1.300" />
                                        <rect x="2.500" y="2.500" width="8" height="15" fill="#02978f" />
                                    </StopPin>
                                </StopBar>
                                <StopTools>
                                    <StopTool>
                                        <svg width="15" height="17" viewBox="0 0 15 17" fill="none" stroke="#666"><path d="M6 2h8v10l-3.500 4L7 12V5M1 4h5M3.500 1.500v5M9 4v8h3V4" /></svg>
                                    </StopTool>
                                    <StopTool>
                                        <svg width="15" height="17" viewBox="0 0 15 17" fill="none" stroke="#666"><path d="M7 2h7v10l-3.500 4L7 12V7M9 4v8h3V4" /><path d="M1 1l5 5M6 1L1 6" stroke="#d8476a" /></svg>
                                    </StopTool>
                                </StopTools>
                            </Field>
                            <Field $mt={10} $h={28} $pl={39}>
                                <span><u>C</u>olor</span>
                                <PickBox>
                                    <svg width="15" height="16" viewBox="0 0 15 16" fill="none" stroke="#555"><path d="M7 1l4.500 5-4 4-4-4zM11 5l2 3" /><rect y="12" width="15" height="4" fill="#02978f" stroke="none" /></svg>
                                    <Tri />
                                </PickBox>
                            </Field>
                            <Field $mt={7} $h={19} $pl={39}>
                                <span><u>P</u>osition</span>
                                <Spin $w={67} $h={19} $pl={6}>100%<SpinMark /></Spin>
                            </Field>
                        </PaneContent>
                        <VScroll $w={14} $m="0 0 0 0">
                            <ScrollBtn><Tri up w={8} /></ScrollBtn>
                            <ScrollThumb $h={273} />
                            <ScrollTrack />
                            <ScrollBtn><Tri w={8} /></ScrollBtn>
                        </VScroll>
                    </PaneScroll>
                </FormatPane>
            </Main>

            <StatusBar>
                <StatusText $w={71}>Slide 3 of 4</StatusText>
                <StatusIcon width="14" height="13" viewBox="0 0 14 13"><path d="M.5 1.500C3 .5 5.500.5 7 2c1.500-1.500 4-1.500 6.500-.5v9H9L7 12.500V2M.5 1.500v9H5" /><path d="M9 9l1.500 1.500L13 7" /></StatusIcon>
                <StatusText $ml={16} $w={125}>English (United States)</StatusText>
                <StatusIcon width="15" height="15" viewBox="0 0 15 15"><circle cx="6.500" cy="2.500" r="1.500" /><path d="M1 5l4 1v3l-2 5M12 5L8 6v3l1 2M10 10l4 4M14 10l-4 4" /></StatusIcon>
                <StatusText $ml={2} $bold $w={629}>Accessibility: Investigate</StatusText>
                <StatusIcon width="15" height="15" viewBox="0 0 15 15"><path d="M4 3l3.500-2.500L11 3M0 6.500h15M0 10.500h15M0 14.500h15" /></StatusIcon>
                <StatusText $ml={2} $w={46}>Notes</StatusText>
                <ViewBtn $active $w={37}>
                    <StatusIcon width="14" height="13" viewBox="0 0 14 13"><path d="M.5.500h13v12H.5zM4 .5v12M6.500 3h5v5h-5zM.5 10.500h13" /></StatusIcon>
                </ViewBtn>
                <ViewBtn $w={38}>
                    <StatusIcon width="14" height="13" viewBox="0 0 14 13"><path d="M.5.500h5v5h-5zM8.500.5h5v5h-5zM.5 7.500h5v5h-5zM8.500 7.500h5v5h-5z" /></StatusIcon>
                </ViewBtn>
                <ViewBtn $w={38}>
                    <StatusIcon width="14" height="13" viewBox="0 0 14 13"><path d="M.5.500H6l1 1 1-1h5.500v12H8l-1-.5-1 .5H.5zM7 1.500V12M2 3.500h3M2 6h3M2 8.500h3M9 3.500h3M9 6h3M9 8.500h3" /></StatusIcon>
                </ViewBtn>
                <ViewBtn $w={38}>
                    <StatusIcon width="12" height="14" viewBox="0 0 12 14"><path d="M0 .5h12M1 .5v7h10v-7M6 7.500V13M3 13.500h6" /></StatusIcon>
                </ViewBtn>
                <StatusIcon $ml={-1} width="7" height="1" viewBox="0 0 7 1"><path d="M0 .5h7" /></StatusIcon>
                <ZoomSlider>
                    <ZoomKnob />
                    <ZoomTick />
                </ZoomSlider>
                <StatusIcon $ml={4} width="9" height="9" viewBox="0 0 9 9"><path d="M0 4.500h9M4.500 0v9" /></StatusIcon>
                <StatusText $ml={16} $w={25}>68%</StatusText>
                <StatusIcon $ml={2} width="14" height="14" viewBox="0 0 14 14"><path d="M4 3.500h6v7H4zM2.500 5L.5 7l2 2M11.500 5l2 2-2 2M5.500 2L7 .5 8.500 2M5.500 12L7 13.500 8.500 12" /></StatusIcon>
            </StatusBar>

            <Cursor width="13" height="20" viewBox="0 0 13 20">
                <path d="M1 1v15l3.500-3.300L7 19l2.500-1-2.500-5.800 5-.2z" fill="#fff" stroke="#222" />
            </Cursor>
        </Page>
    );
};

export default App;
